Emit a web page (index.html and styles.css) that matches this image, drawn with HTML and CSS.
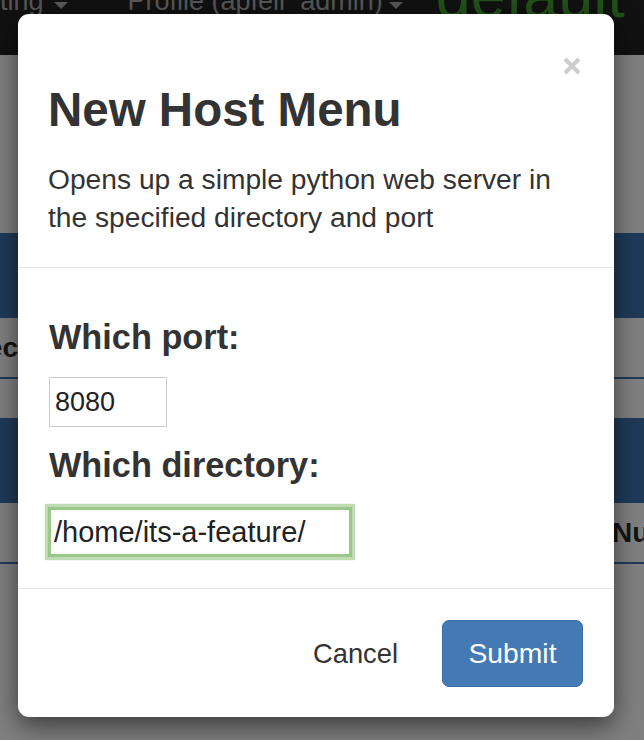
FILE: index.html
```html
<!DOCTYPE html>
<html>
<head>
<meta charset="utf-8">
<link rel="stylesheet" href="styles.css">
</head>
<body>
<div class="page">
  <nav class="navbar">
    <div class="nav-item first"><span class="nav-text">Hosting</span><span class="caret"></span></div>
    <div class="nav-item profile"><span class="nav-text">Profile (apfell_admin)</span><span class="caret"></span></div>
    <div class="brand">default</div>
  </nav>
  <div class="content">
    <div class="spacer"></div>
    <div class="band"></div>
    <div class="row">
      <div class="cell-left"><span>Selec</span></div>
      <div class="cell-fill"></div>
      <div class="cell-right"></div>
    </div>
    <div class="gap"></div>
    <div class="band"></div>
    <div class="row">
      <div class="cell-left"></div>
      <div class="cell-fill"></div>
      <div class="cell-right"><span>Number</span></div>
    </div>
  </div>
</div>

<div class="modal">
  <button class="close" aria-label="Close">
    <svg width="20" height="20" viewBox="0 0 20 20"><path d="M3 3 L17 17 M17 3 L3 17" stroke="#cdcdcd" stroke-width="4.2" stroke-linecap="butt" fill="none"/></svg>
  </button>
  <div class="modal-header">
    <h3 class="modal-title">New Host Menu</h3>
    <p class="modal-desc">Opens up a simple python web server in the specified directory and port</p>
  </div>
  <div class="modal-body">
    <h4 class="label">Which port:</h4>
    <input class="field port" type="text" value="8080">
    <h4 class="label second">Which directory:</h4>
    <input class="field dir" type="text" value="/home/its-a-feature/">
  </div>
  <div class="modal-footer">
    <button class="btn-cancel">Cancel</button>
    <button class="btn-submit">Submit</button>
  </div>
</div>
</body>
</html>
```

FILE: styles.css
```css
* { box-sizing: border-box; }
html, body {
  margin: 0;
  padding: 0;
  width: 644px;
  height: 740px;
  overflow: hidden;
  background: #808080;
  font-family: "Liberation Sans", Arial, sans-serif;
}
.page { width: 644px; }
.navbar {
  height: 55px;
  background: #111111;
  display: flex;
  align-items: flex-start;
  overflow: hidden;
  color: #575757;
}
.nav-item {
  display: flex;
  align-items: flex-start;
  white-space: nowrap;
}
.nav-text {
  font-size: 27px;
  line-height: 30px;
  margin-top: -14px;
}
.first { margin-left: -48px; }
.first .caret { margin-left: 10px; }
.profile { margin-left: 60px; }
.profile .caret { margin-left: 6px; }
.caret {
  width: 0;
  height: 0;
  margin-top: 2px;
  border-left: 7px solid transparent;
  border-right: 7px solid transparent;
  border-top: 7px solid #575757;
}
.brand {
  margin-left: 33px;
  font-size: 63px;
  line-height: 70px;
  margin-top: -40px;
  color: #22501a;
  white-space: nowrap;
}
.content { display: flex; flex-direction: column; }
.spacer { height: 178px; }
.band { height: 85px; background: #1f3a59; }
.gap { height: 39px; }
.row {
  height: 61px;
  display: flex;
  align-items: center;
  border-bottom: 2px solid #1f3a59;
  font-size: 28px;
  font-weight: bold;
  color: #141414;
}
.cell-left {
  width: 18px;
  overflow: hidden;
  display: flex;
  justify-content: flex-end;
  white-space: nowrap;
}
.cell-fill { flex: 1; }
.cell-right {
  width: 32px;
  overflow: hidden;
  white-space: nowrap;
}

/* modal overlay */
.modal {
  position: absolute;
  left: 18px;
  top: 14px;
  width: 596px;
  background: #ffffff;
  border-radius: 11px;
  box-shadow: 0 9px 26px rgba(0, 0, 0, 0.55);
  color: #333333;
}
.close {
  position: absolute;
  top: 42px;
  right: 32px;
  width: 20px;
  height: 20px;
  padding: 0;
  border: 0;
  background: none;
  display: flex;
}
.modal-header {
  padding: 70px 30px 31px 30px;
  border-bottom: 1px solid #e5e5e5;
}
.modal-title {
  margin: 0;
  font-size: 47.5px;
  line-height: 52px;
  font-weight: bold;
}
.modal-desc {
  margin: 24px 0 0 0;
  font-size: 28.2px;
  line-height: 38px;
}
.modal-body {
  padding: 51px 30px 31px 31px;
  border-bottom: 1px solid #e5e5e5;
  display: flex;
  flex-direction: column;
  align-items: flex-start;
}
.label {
  margin: 0 0 21px 0;
  font-size: 34.3px;
  line-height: 37px;
  font-weight: bold;
}
.label.second { margin: 20px 0 23px 0; }
.field {
  height: 50px;
  margin: 0;
  border: 1px solid #cccccc;
  border-radius: 0;
  background: #fff;
  color: #222;
  font-family: "Liberation Sans", Arial, sans-serif;
  outline: none;
}
.port {
  width: 118px;
  padding: 0 5px;
  font-size: 27px;
}
.dir {
  width: 304px;
  padding: 0 3px;
  font-size: 29px;
  border: 3px solid #9bc889;
  box-shadow: 0 0 1px 3px rgba(170, 210, 155, 0.75);
  margin-left: -1px;
}
.modal-footer {
  padding: 31px 31px 30px 31px;
  display: flex;
  justify-content: flex-end;
  align-items: center;
  gap: 44px;
}
.btn-cancel {
  padding: 0;
  border: 0;
  background: none;
  font-family: "Liberation Sans", Arial, sans-serif;
  font-size: 27.3px;
  color: #333333;
}
.btn-submit {
  width: 141px;
  height: 67px;
  border: 1px solid #3a6ea6;
  border-radius: 7px;
  background: #4479b3;
  color: #ffffff;
  font-family: "Liberation Sans", Arial, sans-serif;
  font-size: 28.3px;
}
```
